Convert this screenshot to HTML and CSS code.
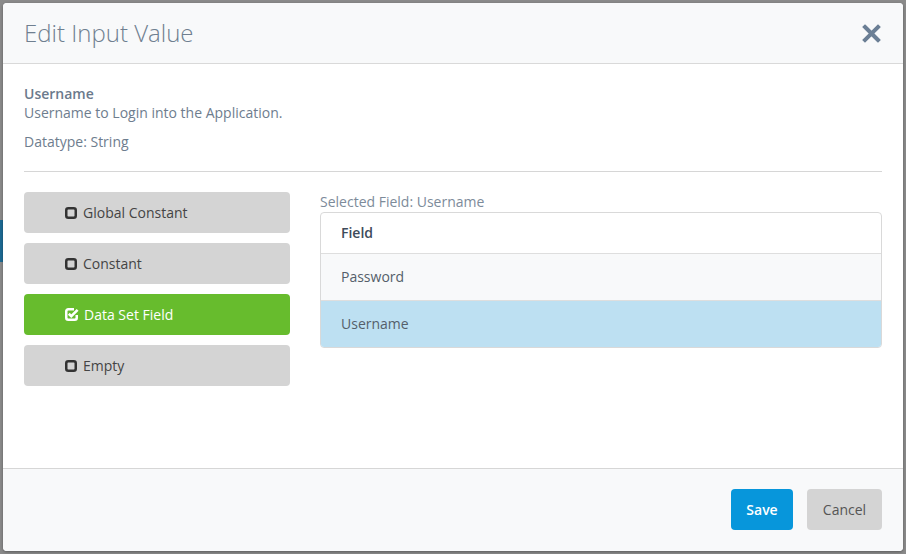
FILE: index.html
```html
<!DOCTYPE html>
<html>
<head>
<meta charset="utf-8">
<link rel="stylesheet" href="styles.css">
</head>
<body>
<div class="backdrop-strip"></div>
<div class="modal">
  <div class="modal-header">
    <h1 class="modal-title">Edit Input Value</h1>
    <button class="close" aria-label="Close">
      <svg width="19" height="19" viewBox="0 0 19 19"><path d="M3 3 L16 16 M16 3 L3 16" stroke="#6b7f95" stroke-width="4" stroke-linecap="square"/></svg>
    </button>
  </div>
  <div class="modal-body">
    <div class="param-name">Username</div>
    <div class="param-desc">Username to Login into the Application.</div>
    <div class="param-type">Datatype: String</div>
    <hr class="divider">
    <div class="content">
      <div class="options">
        <button class="opt"><svg class="ico" width="12" height="12" viewBox="0 0 12 12"><rect x="1.25" y="1.25" width="9.5" height="9.5" rx="2" fill="none" stroke="#333" stroke-width="2.5"/></svg>Global Constant</button>
        <button class="opt"><svg class="ico" width="12" height="12" viewBox="0 0 12 12"><rect x="1.25" y="1.25" width="9.5" height="9.5" rx="2" fill="none" stroke="#333" stroke-width="2.5"/></svg>Constant</button>
        <button class="opt active"><svg class="ico" width="14" height="13" viewBox="0 0 14 13"><path d="M9 1.25 H3.25 a2 2 0 0 0 -2 2 V9.75 a2 2 0 0 0 2 2 H9.75 a2 2 0 0 0 2 -2 V7" fill="none" stroke="#fff" stroke-width="2.5"/><path d="M3.8 5.8 L6.3 8.2 L12.6 1.8" fill="none" stroke="#fff" stroke-width="2.6"/></svg>Data Set Field</button>
        <button class="opt"><svg class="ico" width="12" height="12" viewBox="0 0 12 12"><rect x="1.25" y="1.25" width="9.5" height="9.5" rx="2" fill="none" stroke="#333" stroke-width="2.5"/></svg>Empty</button>
      </div>
      <div class="fields">
        <div class="selected-label">Selected Field: Username</div>
        <div class="table">
          <div class="row head">Field</div>
          <div class="row alt">Password</div>
          <div class="row selected">Username</div>
        </div>
      </div>
    </div>
  </div>
  <div class="modal-footer">
    <button class="btn save">Save</button>
    <button class="btn cancel">Cancel</button>
  </div>
</div>
</body>
</html>
```
FILE: styles.css
```css
html, body {
  margin: 0;
  padding: 0;
}
body {
  background: #8a8a8a;
  font-family: "Open Sans", "Liberation Sans", sans-serif;
  font-size: 14px;
  line-height: 20px;
  width: 906px;
  height: 554px;
  overflow: hidden;
  position: relative;
}
.backdrop-strip {
  position: absolute;
  left: 0;
  top: 220px;
  width: 4px;
  height: 42px;
  background: #1d6a93;
}
.modal {
  position: relative;
  margin: 3px;
  width: 900px;
  height: 548px;
  background: #fff;
  border-radius: 4px;
  box-shadow: 0 1px 3px rgba(0,0,0,0.35);
  display: flex;
  flex-direction: column;
  overflow: hidden;
}
.modal-header {
  height: 60px;
  background: #f8f9fa;
  border-bottom: 1px solid #d9d9d9;
  display: flex;
  align-items: center;
  justify-content: space-between;
  padding: 0 21px;
  flex-shrink: 0;
}
.modal-title {
  margin: 0;
  font-weight: 300;
  font-size: 24px;
  color: #6f7f90;
}
.close {
  border: 0;
  background: none;
  padding: 0;
  width: 19px;
  height: 19px;
  margin-right: 1px;
  margin-top: 1px;
}
.modal-body {
  flex: 1;
  padding: 20px 21px 0;
  color: #6e7d8e;
}
.param-name {
  font-weight: 600;
  color: #6b7a8c;
}
.param-desc {
  margin-top: -1px;
}
.param-type {
  margin-top: 9px;
}
.divider {
  border: 0;
  border-top: 1px solid #d6d6d6;
  margin: 19px 0 20px;
}
.content {
  display: flex;
  gap: 30px;
}
.options {
  width: 266px;
  display: flex;
  flex-direction: column;
  gap: 10px;
}
.opt {
  height: 41px;
  border: 0;
  border-radius: 4px;
  background: #d4d4d4;
  color: #444;
  font-family: inherit;
  font-size: 14px;
  text-align: left;
  padding: 0 0 0 41px;
  display: flex;
  align-items: center;
}
.opt .ico {
  margin-right: 6px;
}
.opt.active {
  background: #67bc2d;
  color: #fff;
}
.opt.active .ico {
  margin-right: 5px;
}
.fields {
  flex: 1;
}
.selected-label {
  color: #7d8b9a;
}
.table {
  border: 1px solid #d9d9d9;
  border-radius: 4px;
  overflow: hidden;
}
.row {
  padding: 0 20px;
  display: flex;
  align-items: center;
  color: #555f6a;
}
.row.head {
  height: 40px;
  font-weight: 600;
  color: #3d4b5a;
  border-bottom: 1px solid #dedede;
}
.row.alt {
  height: 46px;
  background: #f8f9fa;
  border-bottom: 1px solid #dedede;
}
.row.selected {
  height: 46px;
  background: #bde0f2;
}
.modal-footer {
  height: 83px;
  background: #f8f9fa;
  border-top: 1px solid #d6d6d6;
  display: flex;
  align-items: flex-start;
  justify-content: flex-end;
  gap: 14px;
  padding: 20px 21px 0;
  box-sizing: border-box;
  flex-shrink: 0;
}
.btn {
  height: 41px;
  border: 0;
  border-radius: 4px;
  font-family: inherit;
  font-size: 14px;
  padding: 0;
}
.btn.save {
  width: 62px;
  background: #0796db;
  color: #fff;
  font-weight: 600;
}
.btn.cancel {
  width: 75px;
  background: #d4d4d4;
  color: #555;
}
```
